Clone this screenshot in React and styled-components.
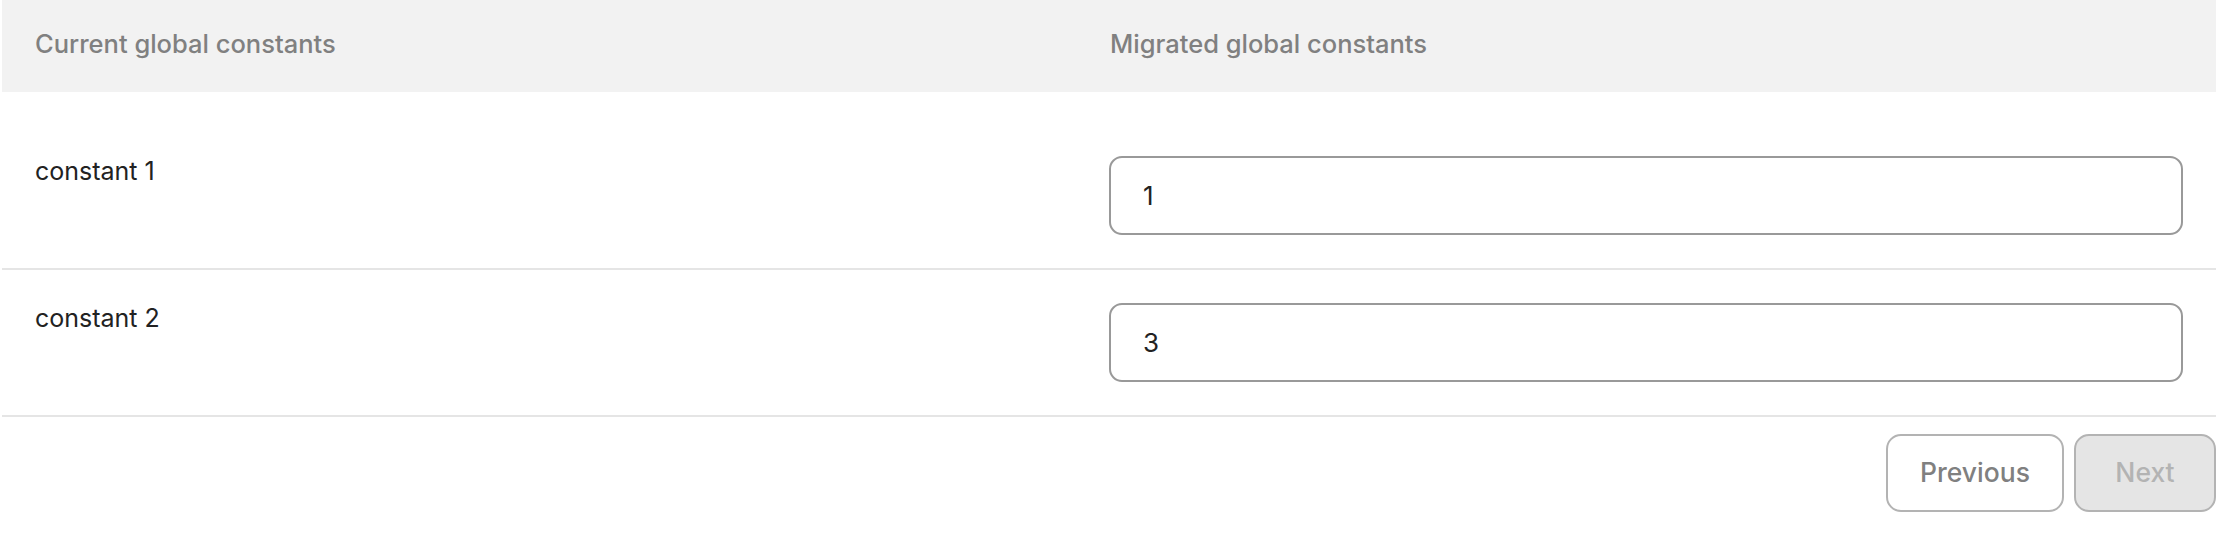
import React from 'react';
import styled, { createGlobalStyle } from 'styled-components';

const GlobalStyle = createGlobalStyle`
  body {
    margin: 0;
    background: #ffffff;
    font-family: Inter, 'Noto Sans', sans-serif;
  }
`;

const constants = [
  { name: 'constant 1', value: '1' },
  { name: 'constant 2', value: '3' },
];

export default function App() {
  return (
    <>
      <GlobalStyle />
      <Wrapper>
        <HeaderRow>
          <HeadCell>Current global constants</HeadCell>
          <HeadCell $right>Migrated global constants</HeadCell>
        </HeaderRow>
        <Body>
          {constants.map((c) => (
            <Row key={c.name}>
              <Label>{c.name}</Label>
              <InputCell>
                <ValueInput defaultValue={c.value} />
              </InputCell>
            </Row>
          ))}
        </Body>
        <Footer>
          <NavButton $width={178}>Previous</NavButton>
          <NavButton $width={142} disabled>
            Next
          </NavButton>
        </Footer>
      </Wrapper>
    </>
  );
}

const Wrapper = styled.div`
  margin-left: 2px;
  width: 2214px;
`;

const HeaderRow = styled.div`
  display: grid;
  grid-template-columns: 1fr 1fr;
  height: 92px;
  padding-bottom: 6px;
  box-sizing: border-box;
  align-items: center;
  background-color: #f2f2f2;
`;

const HeadCell = styled.div`
  padding-left: ${(p) => (p.$right ? '1px' : '33px')};
  font-size: 25.5px;
  font-weight: 500;
  color: #808080;
`;

const Body = styled.div`
  padding-top: 31px;
`;

const Row = styled.div`
  display: grid;
  grid-template-columns: 1fr 1fr;
  padding: 33px 0 33px;
  border-bottom: 2px solid #e5e5e5;
`;

const Label = styled.div`
  padding-left: 33px;
  font-size: 25px;
  line-height: 31px;
  color: #222222;
`;

const InputCell = styled.div`
  padding-right: 33px;
`;

const ValueInput = styled.input`
  box-sizing: border-box;
  display: block;
  width: 100%;
  height: 79px;
  padding: 0 32px;
  border: 2px solid #999999;
  border-radius: 13px;
  font-family: Inter, 'Noto Sans', sans-serif;
  font-size: 26px;
  color: #222222;
  background: #ffffff;
  outline: none;
`;

const Footer = styled.div`
  display: flex;
  justify-content: flex-end;
  gap: 10px;
  padding-top: 17px;
`;

const NavButton = styled.button`
  box-sizing: border-box;
  width: ${(p) => p.$width}px;
  height: 78px;
  padding: 0 0 2px;
  border: 2px solid #b3b3b3;
  border-radius: 15px;
  background: #ffffff;
  font-family: Inter, 'Noto Sans', sans-serif;
  font-size: 26.5px;
  font-weight: 500;
  color: #808080;
  cursor: pointer;

  &:disabled {
    background: #e5e5e5;
    color: #b3b3b3;
    cursor: default;
  }
`;
